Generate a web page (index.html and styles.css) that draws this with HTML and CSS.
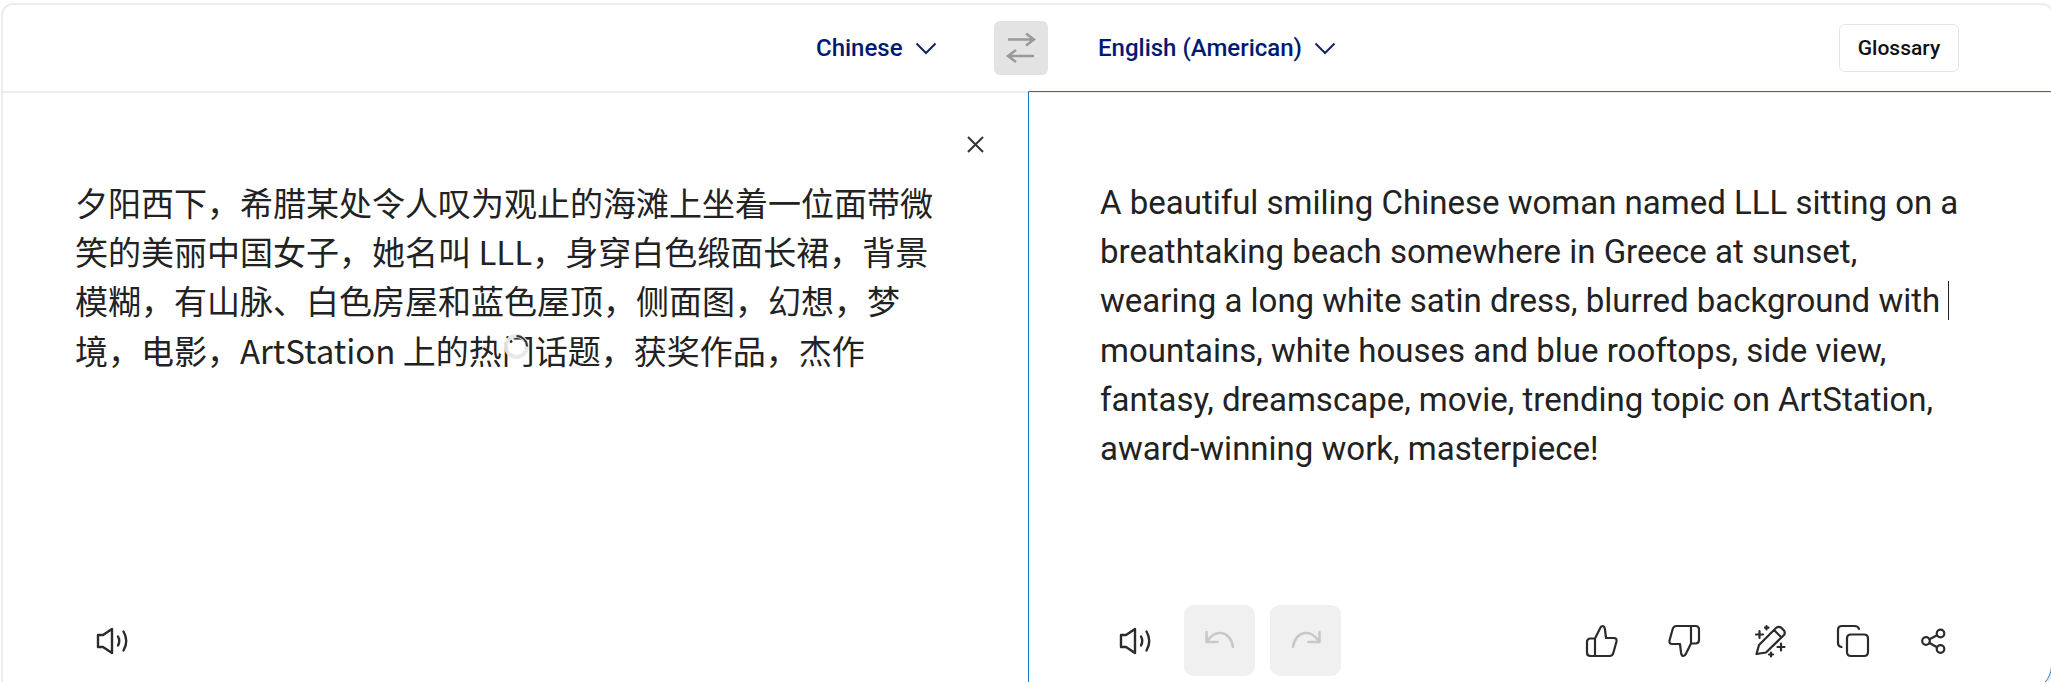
FILE: index.html
```html
<!DOCTYPE html>
<html lang="zh">
<head>
    <meta charset="UTF-8">
    <title>Translator</title>
    <link rel="stylesheet" href="styles.css">
</head>
<body>

    <div class="card">
        <!-- Language bar -->
        <div class="topbar">
            <div class="lang lang-source">
                <span>Chinese</span>
                <svg class="chevron" viewBox="0 0 22 13"><path d="M1.500 1.500L11 11l9.500-9.500"/></svg>
            </div>
            <div class="swap">
                <svg viewBox="0 0 30 30"><path d="M2 6.500h26M20 .5l8 6-8 6M28 23H2M10 17l-8 6 8 6"/></svg>
            </div>
            <div class="lang lang-target">
                <span>English (American)</span>
                <svg class="chevron" viewBox="0 0 22 13"><path d="M1.500 1.500L11 11l9.500-9.500"/></svg>
            </div>
            <button class="glossary">Glossary</button>
        </div>

        <div class="panels">
            <!-- Source text -->
            <div class="panel panel-source">
                <div class="close-row">
                    <svg class="close" viewBox="0 0 17 17"><path d="M1 1l15 15M16 1L1 16"/></svg>
                </div>
                <p class="source-text">夕阳西下，希腊某处令人叹为观止的海滩上坐着一位面带微笑的美丽中国女子，她名叫 LLL，身穿白色缎面长裙，背景模糊，有山脉、白色房屋和蓝色屋顶，侧面图，幻想，梦境，电影，ArtStation 上的热门话题，获奖作品，杰作</p>
                <div class="actions">
                    <svg class="icon icon-sound" viewBox="0 0 34 28"><path d="M2 8h5l9-6v24l-9-6H2zM22 9.500q2.500 4.500 0 9M27.500 4.500q5.500 9.500 0 19"/></svg>
                </div>
                <div class="spinner"></div>
            </div>

            <!-- Translated text -->
            <div class="panel panel-target">
                <p class="target-text" lang="en">A beautiful smiling Chinese woman named LLL sitting on a breathtaking beach somewhere in Greece at sunset, wearing a long white satin dress, blurred background with<span class="caret"></span> mountains, white houses and blue rooftops, side view, fantasy, dreamscape, movie, trending topic on ArtStation, award-winning work, masterpiece!</p>
                <div class="actions">
                    <svg class="icon icon-sound" viewBox="0 0 34 28"><path d="M2 8h5l9-6v24l-9-6H2zM22 9.500q2.500 4.500 0 9M27.500 4.500q5.500 9.500 0 19"/></svg>
                    <div class="undo-btn">
                        <svg viewBox="0 0 32 32"><path d="M2.500 7v10h11M2.500 17C7 10 12 7.500 17 8c6 .5 11 6 12 14"/></svg>
                    </div>
                    <div class="undo-btn">
                        <svg viewBox="0 0 32 32"><path d="M29.500 7v10h-11M29.500 17C25 10 20 7.500 15 8 9 8.500 4 14 3 22"/></svg>
                    </div>
                    <div class="tools">
                        <svg class="icon" viewBox="0 0 32 32"><path d="M10 13.500H5.500Q2 13.500 2 17v10.500Q2 31 5.500 31h19q3 0 3.800-3l3.200-11.500Q32 13 29 13h-8l-1-8.500Q19.500 1 17.500 1 16 1 15 3.500zM10 13.500V31"/></svg>
                        <svg class="icon flip" viewBox="0 0 32 32"><path d="M10 13.500H5.500Q2 13.500 2 17v10.500Q2 31 5.500 31h19q3 0 3.800-3l3.200-11.500Q32 13 29 13h-8l-1-8.500Q19.500 1 17.500 1 16 1 15 3.500zM10 13.500V31"/></svg>
                        <svg class="icon" viewBox="0 0 32 32"><path d="M3.500 29L6 20 23 3q2.500-2 5-.5l3 3q1.500 2.500 0 4.500L13 27.500zM21 5l7.500 7.500M13.500 1v3.500M12 2.700h3.500M6.500 6v7M3 9.500h7M28 18.500v7M24.500 22h7M18 27.500v4M16 29.500h4"/></svg>
                        <svg class="icon" viewBox="0 0 32 32"><path d="M14 9.500h13q4 0 4 4V27q0 4-4 4H14q-4 0-4-4V13.500q0-4 4-4zM4.500 22Q1 21.500 1 18V5q0-4 4-4h12.500q3.500 0 4.500 3"/></svg>
                        <svg class="icon icon-share" viewBox="0 0 26 26"><circle cx="19.500" cy="5.500" r="3.800"/><circle cx="5" cy="13" r="3.800"/><circle cx="19.500" cy="21" r="3.800"/><path d="M8.500 11.200l7.600-4M8.500 15l7.600 4.200"/></svg>
                    </div>
                </div>
            </div>
        </div>
    </div>

</body>
</html>
```

FILE: styles.css
```css
* { box-sizing: border-box; }
html, body { height: 100%; }
body { margin: 0; padding: 3px 0 0 1px; background-color: white; font-family: Roboto, "Noto Sans CJK SC", sans-serif; color: #222; overflow: hidden; }

/* Card runs a little past the window on the right and bottom */
.card { width: 2053px; height: 689px; border: 2px solid #ececec; border-radius: 12px 12px 26px 12px; display: flex; flex-direction: column; overflow: hidden; }

/* Top bar */
.topbar { height: 88px; flex: none; display: flex; align-items: center; border-bottom: 2px solid #ececec; padding: 0 0 0 813px; }
.lang { display: flex; align-items: center; color: #001a72; font-size: 24px; font-weight: 500; gap: 12px; }
.lang-source { width: 178px; }
.lang-target { width: 791px; padding-left: 50px; }
.chevron { width: 22px; height: 13px; fill: none; stroke: #14245f; stroke-width: 2; }
.swap { width: 54px; height: 54px; background-color: #e3e3e3; border-radius: 6px; display: flex; align-items: center; justify-content: center; }
.swap svg { width: 30px; height: 30px; fill: none; stroke: #999; stroke-width: 2.500; }
.glossary { width: 120px; height: 48px; background-color: white; border: 1px solid #e5e5e5; border-radius: 6px; font-family: inherit; font-size: 21px; font-weight: 500; color: #111; padding: 0; }

/* Panels */
.panels { flex: 1; display: flex; min-height: 0; }
.panel { display: flex; flex-direction: column; position: relative; }
.panel-source { width: 1025px; padding: 0 0 1px 72px; }
.panel-target { flex: 1; padding: 0 0 0 71px; border: 1px solid #1a73c0; border-radius: 0 0 24px 0; margin-top: -2px; }

.close-row { height: 60px; margin-bottom: 25px; display: flex; justify-content: flex-end; align-items: flex-end; padding-right: 44px; }
.close { width: 17px; height: 17px; fill: none; stroke: #333; stroke-width: 2; }

.source-text { margin: 0; width: 870px; font-family: "Noto Sans CJK SC", sans-serif; font-size: 33px; line-height: 49.2px; flex: 1; }
.target-text { margin: 86px 0 0; width: 880px; font-size: 33px; line-height: 49.2px; flex: 1; }
.caret { display: inline-block; width: 1px; height: 39px; margin-left: 8px; margin-right: -9px; background-color: #222; vertical-align: -8px; }

/* Bottom icons */
.actions { height: 97px; flex: none; display: flex; align-items: center; padding-left: 21px; }
.panel-target .actions { padding-left: 19px; gap: 15px; }
.icon { width: 32px; height: 32px; flex: none; fill: none; stroke: #2b2b2b; stroke-width: 2.200; stroke-linecap: round; stroke-linejoin: round; overflow: visible; }
.icon-sound { width: 34px; height: 28px; stroke-width: 2.400; }
.icon-share { width: 26px; height: 26px; }
.flip { transform: rotate(180deg); }
.undo-btn { width: 71px; height: 71px; background-color: #f0f0f0; border-radius: 10px; display: flex; align-items: center; justify-content: center; }
.undo-btn svg { width: 32px; height: 32px; fill: none; stroke: #c8c8c8; stroke-width: 2.600; stroke-linecap: round; stroke-linejoin: round; }
.icon-sound + .undo-btn { margin-left: 16px; }
.tools { display: flex; align-items: center; gap: 52px; margin-left: auto; padding-right: 104px; }

/* Busy cursor */
.spinner { position: absolute; left: 501px; top: 241px; width: 25px; height: 25px; border: 4px solid rgba(232, 232, 232, 0.95); border-radius: 50%; }
.spinner::after { content: ""; position: absolute; inset: -3px; border: 2px solid transparent; border-top-color: #333; border-radius: 50%; transform: rotate(45deg); }
```
